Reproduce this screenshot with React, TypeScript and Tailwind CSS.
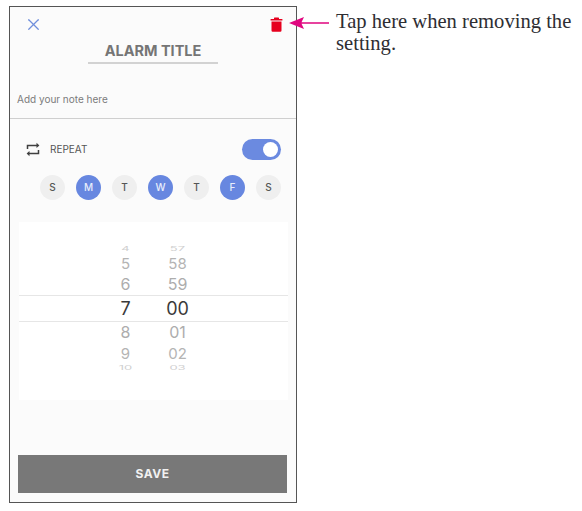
import { X } from "lucide-react";

const days = [
  { label: "S", on: false },
  { label: "M", on: true },
  { label: "T", on: false },
  { label: "W", on: true },
  { label: "T", on: false },
  { label: "F", on: true },
  { label: "S", on: false },
];

// wheel rows above and below the selected time
const rowsAbove = [
  { h: "4", m: "57", cls: "h-[8px] text-[13px] text-[#cfcfcf]", txt: "scale-y-50" },
  { h: "5", m: "58", cls: "h-[22px] text-[15px] text-[#b4b4b4]", txt: "" },
  { h: "6", m: "59", cls: "h-[20px] text-[16px] text-[#adadad]", txt: "" },
];

const rowsBelow = [
  { h: "8", m: "01", cls: "h-[20px] text-[16px] text-[#adadad]", txt: "" },
  { h: "9", m: "02", cls: "h-[22px] text-[15px] text-[#b4b4b4]", txt: "" },
  { h: "10", m: "03", cls: "h-[7px] text-[13px] text-[#cfcfcf]", txt: "scale-y-50" },
];

function WheelRow({ h, m, cls, txt }: { h: string; m: string; cls: string; txt: string }) {
  return (
    <div className={"flex justify-center items-center leading-none pr-[4px] " + cls}>
      <span className={"w-[52px] text-center " + txt}>{h}</span>
      <span className={"w-[52px] text-center " + txt}>{m}</span>
    </div>
  );
}

export default function App() {
  return (
    <div className="w-[582px] h-[511px] bg-white flex items-start pl-[9px] pt-[6px] font-['Inter',sans-serif] overflow-hidden">
      {/* PHONE */}
      <div className="w-[288px] h-[497px] shrink-0 border border-[#555555] bg-[#fbfbfb] flex flex-col">
        {/* TOP BAR */}
        <div className="flex justify-between items-center pl-[14px] pr-[13px] pt-[5px] h-[30px]">
          <X size={19} strokeWidth={1.6} className="text-[#6f8fdc]" />
          <TrashIcon />
        </div>

        {/* TITLE */}
        <div className="mt-[5px] text-center text-[14.5px] leading-[18px] font-bold text-[#757575]">
          ALARM TITLE
        </div>
        <div className="w-[130px] h-[2px] bg-[#d2d2d2] ml-[78px] mt-[2px]" />

        {/* NOTE */}
        <div className="mt-[28px] pl-[7px] text-[10px] leading-[14px] text-[#7c7c7c]">
          Add your note here
        </div>
        <div className="h-px bg-[#cfcfcf] mt-[12px]" />

        {/* REPEAT */}
        <div className="flex items-center justify-between pl-[16px] pr-[15px] mt-[19px] h-[22px]">
          <div className="flex items-center gap-[10px]">
            <RepeatIcon />
            <span className="text-[10px] text-[#555555]">REPEAT</span>
          </div>
          <div className="w-[39px] h-[21px] rounded-full bg-[#6b8ae0] flex items-center justify-end pr-[3px]">
            <div className="w-[15px] h-[15px] rounded-full bg-white" />
          </div>
        </div>

        {/* DAYS */}
        <div className="flex gap-[11px] pl-[30px] mt-[15px]">
          {days.map((d, i) => (
            <div
              key={i}
              className={
                "w-[25px] h-[25px] rounded-full flex items-center justify-center text-[10px] font-medium " +
                (d.on ? "bg-[#6787e0] text-[#e8edfb]" : "bg-[#efefef] text-[#555555]")
              }
            >
              {d.label}
            </div>
          ))}
        </div>

        {/* TIME WHEEL */}
        <div className="mt-[22px] ml-[9px] mr-[8px] h-[178px] bg-white pt-[22px]">
          {rowsAbove.map((r, i) => (
            <WheelRow key={i} {...r} />
          ))}
          <div className="flex justify-center items-center h-[27px] mt-px pr-[4px] border-y border-[#e6e6e6] text-[18px] text-[#3a3a3a]">
            <span className="w-[52px] text-center">7</span>
            <span className="w-[52px] text-center">00</span>
          </div>
          {rowsBelow.map((r, i) => (
            <WheelRow key={i} {...r} />
          ))}
        </div>

        {/* SAVE */}
        <div className="mt-auto mb-[9px] ml-[8px] mr-[9px] h-[38px] bg-[#787878] flex items-center justify-center text-[12px] font-bold tracking-[0.5px] text-[#f1f1f1]">
          SAVE
        </div>
      </div>

      {/* CALLOUT */}
      <div className="flex items-start -ml-[8px] mt-[4px]">
        <svg width="40" height="16" viewBox="0 0 40 16" className="shrink-0 mt-[5px]">
          <path d="M0 8 L15 2 L12.5 7.2 L40 7.2 L40 8.8 L12.5 8.8 L15 14 Z" fill="#e0067f" />
        </svg>
        <div className="ml-[7px] w-[245px] font-['Liberation_Serif',serif] text-[20.6px] leading-[22px] text-[#2e2e33]">
          Tap here when removing the setting.
        </div>
      </div>
    </div>
  );
}

function TrashIcon() {
  return (
    <svg width="13" height="15" viewBox="0 0 13 15" fill="#e6001e">
      <rect x="0.5" y="2" width="12" height="1.6" rx="0.5" />
      <rect x="4" y="0.4" width="5" height="2" rx="0.6" />
      <path d="M1.5 4.4 H11.5 V13.5 A1.2 1.2 0 0 1 10.3 14.7 H2.7 A1.2 1.2 0 0 1 1.5 13.5 Z" />
    </svg>
  );
}

function RepeatIcon() {
  return (
    <svg width="14" height="15" viewBox="0 0 14 15" fill="none" stroke="#3f3f3f" strokeWidth="1.5">
      <path d="M1.5 7 V3.4 H11" />
      <path d="M12.5 8 V11.6 H3" />
      <path d="M10.5 0.8 L13.4 3.4 L10.5 6 Z" fill="#3f3f3f" stroke="none" />
      <path d="M3.5 9 L0.6 11.6 L3.5 14.2 Z" fill="#3f3f3f" stroke="none" />
    </svg>
  );
}
